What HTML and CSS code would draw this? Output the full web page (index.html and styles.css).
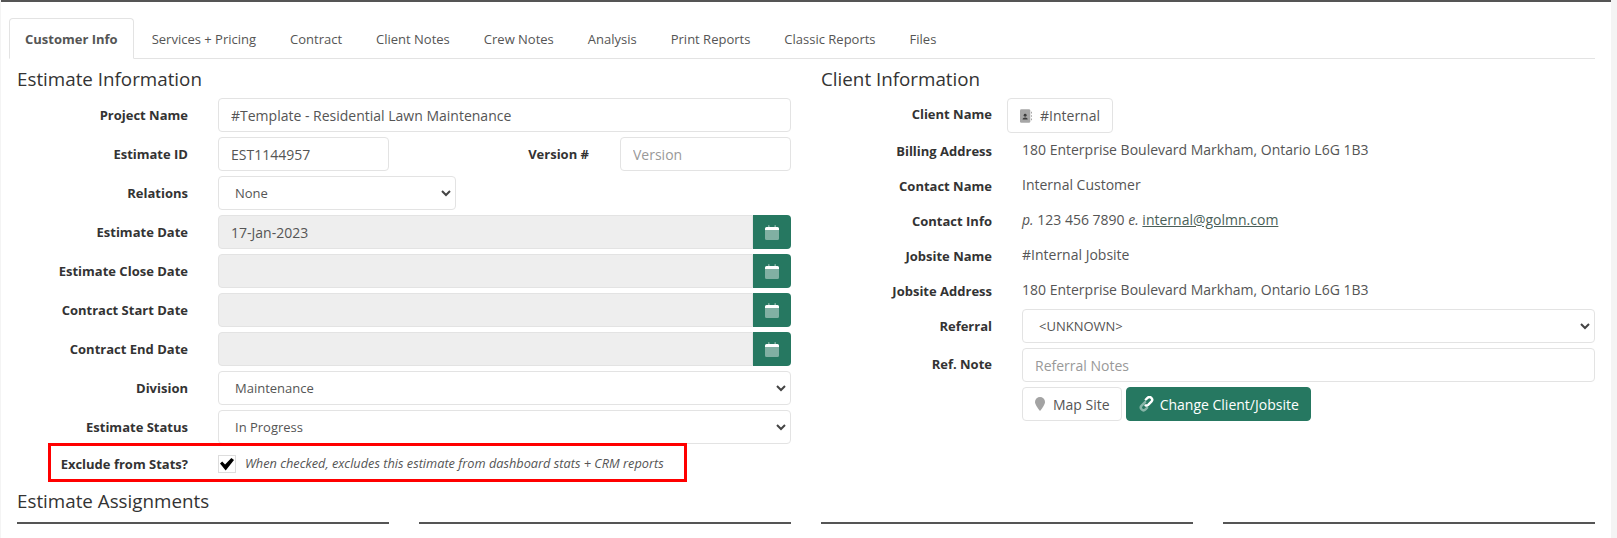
FILE: index.html
```html
<!DOCTYPE html>
<html lang="en">
<head>
  <meta charset="UTF-8" />
  <title>Customer Info</title>
  <link rel="stylesheet" href="styles.css">
</head>
<body>
  <svg class="defs" width="0" height="0">
    <symbol id="calendar" viewBox="0 0 14 15">
      <path class="duo" d="M0 5h14v8.500a1.500 1.500 0 0 1-1.500 1.500h-11A1.500 1.500 0 0 1 0 13.500z"/>
      <path class="duo" d="M3 .8a.8.8 0 0 1 1.600 0V2H3zM9.400 .8a.8.8 0 0 1 1.600 0V2H9.400z"/>
      <path class="solid" d="M1.500 2h11A1.500 1.500 0 0 1 14 3.500V5H0V3.500A1.500 1.500 0 0 1 1.500 2z"/>
    </symbol>
  </svg>

  <div class="page">
    <ul class="tabs">
      <li class="tab active">Customer Info</li>
      <li class="tab">Services + Pricing</li>
      <li class="tab">Contract</li>
      <li class="tab">Client Notes</li>
      <li class="tab">Crew Notes</li>
      <li class="tab">Analysis</li>
      <li class="tab">Print Reports</li>
      <li class="tab">Classic Reports</li>
      <li class="tab">Files</li>
    </ul>

    <div class="columns">
      <section class="col">
        <h2>Estimate Information</h2>
        <div class="form-grid">
          <label>Project Name</label>
          <input type="text" value="#Template - Residential Lawn Maintenance" />

          <label>Estimate ID</label>
          <div class="split">
            <input type="text" value="EST1144957" />
            <label>Version #</label>
            <input type="text" placeholder="Version" />
          </div>

          <label>Relations</label>
          <select class="short"><option>None</option></select>

          <label>Estimate Date</label>
          <div class="date-group">
            <input type="text" value="17-Jan-2023" disabled />
            <button class="date-btn"><svg><use href="#calendar"/></svg></button>
          </div>

          <label>Estimate Close Date</label>
          <div class="date-group">
            <input type="text" disabled />
            <button class="date-btn"><svg><use href="#calendar"/></svg></button>
          </div>

          <label>Contract Start Date</label>
          <div class="date-group">
            <input type="text" disabled />
            <button class="date-btn"><svg><use href="#calendar"/></svg></button>
          </div>

          <label>Contract End Date</label>
          <div class="date-group">
            <input type="text" disabled />
            <button class="date-btn"><svg><use href="#calendar"/></svg></button>
          </div>

          <label>Division</label>
          <select><option>Maintenance</option></select>

          <label>Estimate Status</label>
          <select><option>In Progress</option></select>

          <label class="check-label">Exclude from Stats?</label>
          <div class="check-row">
            <input type="checkbox" checked />
            <em>When checked, excludes this estimate from dashboard stats + CRM reports</em>
          </div>
        </div>
        <div class="red-box"></div>
      </section>

      <section class="col">
        <h2>Client Information</h2>
        <div class="form-grid info-grid">
          <label class="client-label">Client Name</label>
          <div class="client-cell">
            <button class="btn">
              <svg class="client-icon" viewBox="0 0 14 16"><rect class="grey" width="12" height="16" rx="1.600"/><circle class="dark" cx="6" cy="7.200" r="1.700"/><path class="dark" d="M3 12.200c0-1.600 1.300-2.500 3-2.500s3 .9 3 2.500z"/><path class="grey" d="M12.800 3h1.200v2h-1.200zM12.800 7h1.200v2h-1.200zM12.800 11h1.200v2h-1.200z"/></svg>
              #Internal
            </button>
          </div>

          <label class="plain">Billing Address</label>
          <div class="value">180 Enterprise Boulevard Markham, Ontario L6G 1B3</div>

          <label class="plain">Contact Name</label>
          <div class="value">Internal Customer</div>

          <label class="plain">Contact Info</label>
          <div class="value"><i>p.</i> 123 456 7890 <i>e.</i> <a href="#">internal@golmn.com</a></div>

          <label class="plain">Jobsite Name</label>
          <div class="value">#Internal Jobsite</div>

          <label class="plain">Jobsite Address</label>
          <div class="value">180 Enterprise Boulevard Markham, Ontario L6G 1B3</div>

          <label class="referral-label">Referral</label>
          <select class="referral"><option>&lt;UNKNOWN&gt;</option></select>

          <label class="note-label">Ref. Note</label>
          <input class="note" type="text" placeholder="Referral Notes" />

          <span></span>
          <div class="actions">
            <button class="btn btn-map">
              <svg class="pin" viewBox="0 0 10 14"><path d="M5 0a5 5 0 0 1 5 5c0 2.400-3 6.800-5 9-2-2.200-5-6.600-5-9a5 5 0 0 1 5-5z"/></svg>
              Map Site
            </button>
            <button class="btn btn-green">
              <svg class="link-icon" viewBox="0 0 16 16">
                <path class="link-back" d="M6.500 6 2.800 9.700a2.900 2.900 0 0 0 4.100 4.100l1.800-1.800"/>
                <path class="link-front" d="M7 9.500a2.900 2.900 0 0 0 2.800-.6l3.400-3.400a2.900 2.900 0 0 0-4.100-4.100L7.300 3.200"/>
              </svg>
              Change Client/Jobsite
            </button>
          </div>
        </div>
      </section>
    </div>

    <h2 class="assign-title">Estimate Assignments</h2>
    <div class="assignments">
      <div class="rule"></div>
      <div class="rule"></div>
      <div class="rule"></div>
      <div class="rule"></div>
    </div>
  </div>
</body>
</html>
```

FILE: styles.css
```css
* {
  box-sizing: border-box;
}

html,
body {
  height: 100%;
}

body {
  margin: 0;
  background: #f4f4f4;
  font-family: "Open Sans", sans-serif;
  font-size: 14px;
  color: #555;
  overflow: hidden;
}

.defs {
  display: block;
  height: 0;
}

.page {
  width: 1610px;
  height: 538px;
  margin-left: 1px;
  padding: 0 16px 0 8px;
  background: #fff;
  border-top: 2px solid #555;
}

/* tabs */
.tabs {
  display: flex;
  list-style: none;
  margin: 16px 0 0;
  padding: 0;
  height: 41px;
  border-bottom: 1px solid #e3e3e3;
}

.tab {
  height: 41px;
  padding: 0 16px;
  line-height: 40px;
  font-size: 13px;
  color: #555;
  border: 1px solid transparent;
}

.tab.active {
  padding: 0 15px;
  margin-right: 1px;
  font-weight: 700;
  border-color: #e3e3e3;
  border-bottom-color: #fff;
  border-radius: 4px 4px 0 0;
  background: #fff;
}

/* columns */
.columns {
  display: grid;
  grid-template-columns: 774px 774px;
  column-gap: 30px;
  padding-left: 8px;
}

.col {
  position: relative;
}

h2 {
  margin: 0;
  font-size: 18.8px;
  font-weight: 400;
  line-height: 24px;
  color: #333;
}

.col h2 {
  height: 39px;
  padding-top: 8px;
}

.form-grid {
  display: grid;
  grid-template-columns: 171px 1fr;
  column-gap: 30px;
  row-gap: 5px;
  align-items: center;
}

label {
  text-align: right;
  font-size: 13px;
  font-weight: 700;
  color: #333;
}

input[type="text"],
select {
  display: block;
  width: 100%;
  height: 34px;
  padding: 0 12px;
  font-family: "Open Sans", sans-serif;
  font-size: 14px;
  color: #555;
  background-color: #fff;
  border: 1px solid #e3e3e3;
  border-radius: 4px;
}

input::placeholder {
  color: #999;
}

input[type="text"]:disabled {
  background: #eee;
}

select {
  appearance: none;
  padding-left: 16px;
  font-size: 13px;
  background-image: url("data:image/svg+xml,%3csvg xmlns='http://www.w3.org/2000/svg' viewBox='0 0 10 7'%3e%3cpath fill='none' stroke='%23444' stroke-width='2' d='M1 1l4 4 4-4'/%3e%3c/svg%3e");
  background-repeat: no-repeat;
  background-position: right 4px center;
  background-size: 10px 7px;
}

select.short {
  width: 238px;
}

.split {
  display: grid;
  grid-template-columns: 171px 1fr 171px;
  align-items: center;
}

.split label {
  padding-right: 31px;
}

.date-group {
  display: flex;
}

.date-group input[type="text"] {
  border-radius: 4px 0 0 4px;
}

.date-btn {
  flex: 0 0 38px;
  height: 34px;
  padding: 0;
  display: flex;
  align-items: center;
  justify-content: center;
  background: #267861;
  border: 0;
  border-radius: 0 4px 4px 0;
}

.date-btn svg {
  width: 14px;
  height: 15px;
}

.solid {
  fill: #fff;
}

.duo {
  fill: #fff;
  opacity: 0.42;
}

.check-label {
  padding-top: 5px;
}

.check-row {
  display: flex;
  align-items: center;
  gap: 9px;
  margin-top: 6px;
}

.check-row input {
  appearance: none;
  flex: none;
  width: 18px;
  height: 18px;
  margin: 0;
  background: #fff url("data:image/svg+xml,%3csvg xmlns='http://www.w3.org/2000/svg' viewBox='0 0 16 16'%3e%3cpath d='M0 7.500l2.500-2.500 3.300 3.600L13 1l3 2.500-9.500 12z'/%3e%3c/svg%3e") center / 14px 14px no-repeat;
  border: 1px solid #ddd;
}

.check-row em {
  font-size: 12.75px;
  color: #555;
  margin-top: -2px;
}

.red-box {
  position: absolute;
  left: 31px;
  top: 384px;
  width: 639px;
  height: 39px;
  border: 3px solid #f00;
}

/* client column */
.info-grid {
  grid-template-rows: repeat(6, 35px) 40px 39px 34px;
  row-gap: 0;
}

.client-label {
  padding-bottom: 3px;
}

label.plain {
  padding-top: 1px;
}

.value {
  padding-bottom: 3px;
}

.value a {
  color: #4a5f58;
}

.referral-label {
  padding-bottom: 4px;
}

select.referral {
  margin: 1px 0 5px;
}

.note-label {
  padding-bottom: 7px;
}

input.note {
  margin-bottom: 5px;
}

.client-cell {
  margin-left: -15px;
}

.btn {
  display: inline-flex;
  align-items: center;
  gap: 8px;
  height: 34px;
  padding: 0 12px;
  font-family: "Open Sans", sans-serif;
  font-size: 14px;
  color: #555;
  background: #fff;
  border: 1px solid #e3e3e3;
  border-radius: 4px;
}

.client-cell .btn {
  height: 35px;
  display: flex;
  width: 106px;
}

.client-icon {
  width: 12px;
  height: 14px;
  flex: none;
}

.grey {
  fill: #a6a6a6;
}

.dark {
  fill: #3d3d3d;
}

.pin {
  width: 10px;
  height: 14px;
  fill: #a3a3a3;
}

.actions {
  display: flex;
  gap: 4px;
}

.btn-map {
  padding-right: 11px;
}

.btn-green {
  gap: 6px;
  padding-right: 11px;
  background: #267861;
  border-color: #267861;
  color: #fff;
}

.link-icon {
  width: 15px;
  height: 16px;
  fill: none;
  stroke: #fff;
  stroke-width: 2.600;
  stroke-linecap: round;
}

.link-back {
  opacity: 0.45;
}

/* assignments */
.assign-title {
  padding: 16px 0 0 8px;
  height: 49px;
}

.assignments {
  display: grid;
  grid-template-columns: repeat(4, 372px);
  column-gap: 30px;
  padding-left: 8px;
}

.rule {
  height: 2px;
  background: #555;
}
```
